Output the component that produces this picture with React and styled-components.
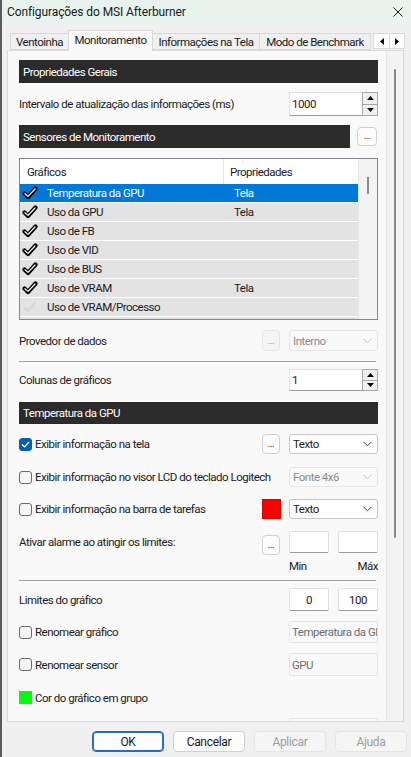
import React from "react";
import styled, { createGlobalStyle } from "styled-components";

const Global = createGlobalStyle`
  html, body { margin: 0; padding: 0; }
  body {
    width: 411px; height: 757px; overflow: hidden;
    font-family: Roboto, "Liberation Sans", sans-serif;
    font-size: 11.5px; color: #000; letter-spacing: -0.5px;
  }
  * { box-sizing: border-box; }
`;

const Window = styled.div`
  width: 411px; height: 757px;
  border-left: 2px solid #5a5a5a;
  background: #f0f0f0;
  display: flex; flex-direction: column;
`;

const TitleBar = styled.div`
  height: 23px; flex: none;
  background: #e9f3ee;
  display: flex; align-items: center; justify-content: space-between;
  padding: 0 8px 0 5px;
  font-size: 12px; letter-spacing: -0.1px; color: #1a1a1a;
`;

const TabStrip = styled.div`
  height: 27px; flex: none;
  display: flex; align-items: flex-end;
  padding-left: 8px; padding-right: 6px;
  position: relative; z-index: 1;
`;

const Tab = styled.div`
  width: ${p => p.$w}px;
  height: ${p => (p.$active ? 21 : 17)}px;
  margin-bottom: ${p => (p.$active ? -1 : 0)}px;
  border: 1px solid #d9d9d9;
  border-bottom: ${p => (p.$active ? "none" : "1px solid #d9d9d9")};
  margin-left: ${p => (p.$first ? 0 : -1)}px;
  background: ${p => (p.$active ? "#f9f9f9" : "#f0f0f0")};
  display: flex; justify-content: center;
  align-items: ${p => (p.$active ? "flex-start" : "center")};
  padding-top: ${p => (p.$active ? 2 : 0)}px;
  white-space: nowrap; color: #1a1a1a;
`;

const ArrowGroup = styled.div`
  margin-left: auto; align-self: flex-start; margin-top: 10px;
  display: flex; height: 16px;
  border: 1px solid #d9d9d9; background: #fdfdfd;
`;

const ArrowBtn = styled.div`
  width: 15px; display: flex; align-items: center; justify-content: center;
  & + & { border-left: 1px solid #d9d9d9; }
`;

const Panel = styled.div`
  height: 672px; flex: none;
  margin: 0 7px 0 5px;
  border: 1px solid #d9d9d9;
  background: #f9f9f9;
  display: flex;
`;

const Viewport = styled.div`
  flex: 1; overflow: hidden; min-width: 0;
  padding: 9px 8px 0 11px;
  display: flex; flex-direction: column;
`;

const Track = styled.div`
  width: 17px; flex: none;
  border-left: 1px solid #e6e6e6;
  background: #f3f3f3;
  display: flex; justify-content: center;
`;

const Thumb = styled.div`
  width: 2px; height: 469px; margin-top: 18px;
  background: #8a8a8a; border-radius: 1px;
`;

const Header = styled.div`
  height: ${p => p.$h || 23}px;
  margin-top: ${p => p.$mt || 0}px;
  background: #2b2b2b; color: #fff;
  display: flex; align-items: center;
  padding-left: 4px;
  flex: ${p => (p.$grow ? 1 : "none")};
  align-self: stretch;
`;

const Row = styled.div`
  display: flex; align-items: center;
  height: ${p => p.$h}px;
  margin-top: ${p => p.$mt}px;
  flex: none;
`;

const Label = styled.div`
  flex: 1; min-width: 0; white-space: nowrap; color: #1a1a1a;
  display: flex; align-items: center;
`;

const Controls = styled.div`
  width: 89px; flex: none; height: 100%;
  display: flex; justify-content: space-between; align-items: stretch;
`;

const Dots = styled.div`
  width: ${p => p.$w || 18}px; height: ${p => p.$h || 20}px; flex: none;
  margin-right: ${p => p.$mr ?? 9}px;
  margin-left: ${p => p.$ml ?? 0}px;
  border: 1px solid ${p => (p.$disabled ? "#e6e6e6" : "#d0d0d0")};
  border-radius: 4px;
  background: ${p => (p.$disabled ? "#f5f5f5" : "#fdfdfd")};
  color: ${p => (p.$disabled ? "#a0a0a0" : "#333")};
  display: flex; align-items: flex-end; justify-content: center;
  font-size: 10px; line-height: 1; padding-bottom: 4px;
  letter-spacing: -0.5px;
  align-self: ${p => (p.$bottom ? "flex-end" : "center")};
`;

const Swatch = styled.div`
  width: 19px; height: 20px; margin-right: 8px; flex: none;
  background: ${p => p.$color};
  border: 1px solid rgba(0,0,0,0.15);
`;

const Select = styled.div`
  width: 89px; height: 100%;
  border: 1px solid ${p => (p.$disabled ? "#e5e5e5" : "#c6c6c6")};
  border-radius: 3px;
  background: ${p => (p.$disabled ? "#f9f9f9" : "#fff")};
  color: ${p => (p.$disabled ? "#8a8a8a" : "#1a1a1a")};
  display: flex; align-items: center; justify-content: space-between;
  padding: 0 5px 0 3px;
`;

const TextBox = styled.div`
  width: ${p => p.$w || 89}px; height: 100%;
  border: 1px solid ${p => (p.$disabled ? "#e5e5e5" : "#e0e0e0")};
  border-bottom-color: ${p => (p.$disabled ? "#e5e5e5" : "#9a9a9a")};
  border-radius: 2px;
  background: ${p => (p.$disabled ? "#f9f9f9" : "#fff")};
  color: ${p => (p.$disabled ? "#6d6d6d" : "#1a1a1a")};
  display: flex; align-items: center;
  justify-content: ${p => (p.$center ? "center" : "flex-start")};
  padding-left: ${p => (p.$center ? 0 : 2)}px;
  overflow: hidden; white-space: nowrap;
`;

const Spin = styled.div`
  width: 89px; height: 100%;
  display: flex;
`;

const SpinInput = styled.div`
  flex: 1; background: #fff;
  border: 1px solid #e0e0e0; border-bottom-color: #9a9a9a; border-right: none;
  display: flex; align-items: center; padding-left: 2px; color: #1a1a1a;
`;

const SpinButtons = styled.div`
  width: 16px; display: flex; flex-direction: column;
  border: 1px solid #a8a8a8; background: #f0f0f0;
`;

const SpinHalf = styled.div`
  flex: 1; display: flex; align-items: center; justify-content: center;
  & + & { border-top: 1px solid #a8a8a8; }
`;

const Separator = styled.div`
  height: 1px; margin-top: ${p => p.$mt}px; margin-right: 2px;
  background: #a0a0a0; flex: none;
`;

const Check = styled.div`
  width: 13px; height: 13px; margin-right: 3px; flex: none;
  border-radius: 3px;
  border: 1px solid ${p => (p.$checked ? "#005fb8" : "#6b6b6b")};
  background: ${p => (p.$checked ? "#005fb8" : "#f5f5f5")};
  display: flex; align-items: center; justify-content: center;
`;

const ColorBox = styled.div`
  width: 13px; height: 13px; margin-right: 3px; flex: none; background: ${p => p.$color};
`;

const SubLabels = styled.div`
  width: 89px; display: flex; justify-content: space-between; color: #1a1a1a;
`;

const ListBox = styled.div`
  height: 162px; margin-top: 10px; flex: none;
  border: 1px solid #828790; background: #fff;
  display: flex;
`;

const ListMain = styled.div`
  flex: 1; overflow: hidden; display: flex; flex-direction: column;
`;

const ListHead = styled.div`
  height: 25px; flex: none; display: flex; align-items: center;
  background: #fff; color: #1a1a1a;
`;

const HeadCell = styled.div`
  width: ${p => p.$w}px; height: 100%;
  display: flex; align-items: center;
  padding-left: ${p => p.$pl}px;
  border-right: ${p => (p.$sep ? "1px solid #e5e5e5" : "none")};
`;

const ListRow = styled.div`
  height: 19px; flex: none; display: flex; align-items: center;
  background: ${p => (p.$sel ? "#0078d7" : "#e3e3e3")};
  border-bottom: 1px solid #fff;
  color: ${p => (p.$sel ? "#fff" : "#1a1a1a")};
`;

const CheckCell = styled.div`
  width: 27px; padding-left: 2px; display: flex; align-items: center;
`;

const NameCell = styled.div`
  width: 183px; white-space: nowrap;
`;

const PropCell = styled.div`
  padding-left: 4px;
`;

const ListScroll = styled.div`
  width: 19px; flex: none; background: #f3f3f3;
  border-left: 1px solid #e8e8e8;
  display: flex; justify-content: center;
`;

const ListThumb = styled.div`
  width: 2px; height: 17px; margin-top: 18px; background: #8a8a8a;
`;

const Footer = styled.div`
  flex: 1; display: flex; justify-content: flex-end; align-items: flex-start;
  gap: 9px; padding: 9px 4px 0 0;
`;

const Button = styled.div`
  width: 72px; height: 21px;
  border-radius: 4px;
  border: 1px solid ${p => (p.$primary ? "#2a6cc0" : p.$disabled ? "#e5e5e5" : "#d0d0d0")};
  box-shadow: ${p => (p.$primary ? "inset 0 0 0 1px #2a6cc0" : "none")};
  background: ${p => (p.$disabled ? "#f5f5f5" : "#fdfdfd")};
  color: ${p => (p.$disabled ? "#9d9d9d" : "#1a1a1a")};
  display: flex; align-items: center; justify-content: center;
  font-size: 12px; letter-spacing: -0.3px;
`;

const Chevron = ({ color = "#333" }) => (
  <svg width="9" height="6" viewBox="0 0 9 6">
    <path d="M0.5 0.8 L4.5 4.8 L8.5 0.8" fill="none" stroke={color} strokeWidth="1" />
  </svg>
);

const Tri = ({ up }) => (
  <svg width="7" height="4" viewBox="0 0 7 4">
    <path d={up ? "M0 4 L3.5 0 L7 4 Z" : "M0 0 L3.5 4 L7 0 Z"} fill="#000" />
  </svg>
);

const SideTri = ({ left }) => (
  <svg width="4" height="7" viewBox="0 0 4 7">
    <path d={left ? "M4 0 L0 3.5 L4 7 Z" : "M0 0 L4 3.5 L0 7 Z"} fill="#000" />
  </svg>
);

const ListCheck = ({ faint }) => (
  <svg width="16" height="14" viewBox="0 0 16 14">
    {faint ? (
      <path d="M2.5 7.5 L6 11 L13.5 2.5" fill="none" stroke="#d8d8d8" strokeWidth="2.5" strokeLinejoin="round" />
    ) : (
      <>
        <path d="M2.5 7.5 L6 11 L13.5 2.5" fill="none" stroke="#000" strokeWidth="4.2" strokeLinejoin="round" strokeLinecap="round" />
        <path d="M3 7.7 L6 10.4 L13 3" fill="none" stroke="#fff" strokeWidth="1.2" strokeLinejoin="round" strokeLinecap="round" />
      </>
    )}
  </svg>
);

const TickMark = () => (
  <svg width="9" height="7" viewBox="0 0 9 7">
    <path d="M1 3.5 L3.5 6 L8 1" fill="none" stroke="#fff" strokeWidth="1.2" />
  </svg>
);

const SpinBox = ({ value }) => (
  <Spin>
    <SpinInput>{value}</SpinInput>
    <SpinButtons>
      <SpinHalf><Tri up /></SpinHalf>
      <SpinHalf><Tri /></SpinHalf>
    </SpinButtons>
  </Spin>
);

const sensors = [
  { name: "Temperatura da GPU", prop: "Tela", sel: true },
  { name: "Uso da GPU", prop: "Tela" },
  { name: "Uso de FB", prop: "" },
  { name: "Uso de VID", prop: "" },
  { name: "Uso de BUS", prop: "" },
  { name: "Uso de VRAM", prop: "Tela" },
  { name: "Uso de VRAM/Processo", prop: "", faint: true },
  { name: "Uso de RAM", prop: "", faint: true },
];

export default function App() {
  return (
    <>
      <Global />
      <Window>
        <TitleBar>
          <span>Configurações do MSI Afterburner</span>
          <svg width="10" height="10" viewBox="0 0 10 10">
            <path d="M0.5 0.5 L9.5 9.5 M9.5 0.5 L0.5 9.5" stroke="#1a1a1a" strokeWidth="1" />
          </svg>
        </TitleBar>

        <TabStrip>
          <Tab $w={59} $first>Ventoinha</Tab>
          <Tab $w={85} $active>Monitoramento</Tab>
          <Tab $w={108}>Informações na Tela</Tab>
          <Tab $w={112}>Modo de Benchmark</Tab>
          <ArrowGroup>
            <ArrowBtn><SideTri left /></ArrowBtn>
            <ArrowBtn><SideTri /></ArrowBtn>
          </ArrowGroup>
        </TabStrip>

        <Panel>
          <Viewport>
            <Header>Propriedades Gerais</Header>

            <Row $h={24} $mt={9}>
              <Label>Intervalo de atualização das informações (ms)</Label>
              <Controls><SpinBox value="1000" /></Controls>
            </Row>

            <Row $h={23} $mt={9}>
              <Header $grow>Sensores de Monitoramento</Header>
              <Dots $w={20} $h={19} $mr={1} $ml={7}>...</Dots>
            </Row>

            <ListBox>
              <ListMain>
                <ListHead>
                  <HeadCell $w={204} $pl={7} $sep>Gráficos</HeadCell>
                  <HeadCell $w={120} $pl={6}>Propriedades</HeadCell>
                </ListHead>
                {sensors.map(s => (
                  <ListRow key={s.name} $sel={s.sel}>
                    <CheckCell><ListCheck faint={s.faint} /></CheckCell>
                    <NameCell>{s.name}</NameCell>
                    <PropCell>{s.prop}</PropCell>
                  </ListRow>
                ))}
              </ListMain>
              <ListScroll><ListThumb /></ListScroll>
            </ListBox>

            <Row $h={21} $mt={10}>
              <Label>Provedor de dados</Label>
              <Dots $disabled $h={21}>...</Dots>
              <Controls>
                <Select $disabled>Interno<Chevron color="#c0c0c0" /></Select>
              </Controls>
            </Row>

            <Separator $mt={10} />

            <Row $h={22} $mt={7}>
              <Label>Colunas de gráficos</Label>
              <Controls><SpinBox value="1" /></Controls>
            </Row>

            <Header $h={22} $mt={11}>Temperatura da GPU</Header>

            <Row $h={20} $mt={10}>
              <Label><Check $checked><TickMark /></Check>Exibir informação na tela</Label>
              <Dots>...</Dots>
              <Controls><Select>Texto<Chevron /></Select></Controls>
            </Row>

            <Row $h={20} $mt={13}>
              <Label><Check />Exibir informação no visor LCD do teclado Logitech</Label>
              <Controls><Select $disabled>Fonte 4x6<Chevron color="#c0c0c0" /></Select></Controls>
            </Row>

            <Row $h={20} $mt={12}>
              <Label><Check />Exibir informação na barra de tarefas</Label>
              <Swatch $color="#ff0000" />
              <Controls><Select>Texto<Chevron /></Select></Controls>
            </Row>

            <Row $h={22} $mt={12}>
              <Label>Ativar alarme ao atingir os limites:</Label>
              <Dots $bottom style={{ marginBottom: -2 }}>...</Dots>
              <Controls>
                <TextBox $w={40} />
                <TextBox $w={40} />
              </Controls>
            </Row>

            <Row $h={14} $mt={6}>
              <Label />
              <SubLabels><span>Min</span><span>Máx</span></SubLabels>
            </Row>

            <Separator $mt={7} />

            <Row $h={23} $mt={7}>
              <Label>Limites do gráfico</Label>
              <Controls>
                <TextBox $w={40} $center>0</TextBox>
                <TextBox $w={40} $center>100</TextBox>
              </Controls>
            </Row>

            <Row $h={22} $mt={10}>
              <Label><Check />Renomear gráfico</Label>
              <Controls><TextBox $disabled>Temperatura da GPU</TextBox></Controls>
            </Row>

            <Row $h={23} $mt={10}>
              <Label><Check />Renomear sensor</Label>
              <Controls><TextBox $disabled>GPU</TextBox></Controls>
            </Row>

            <Row $h={23} $mt={10}>
              <Label><ColorBox $color="#00ff00" />Cor do gráfico em grupo</Label>
            </Row>

            <Row $h={22} $mt={9}>
              <Label />
              <Controls><TextBox $disabled /></Controls>
            </Row>
          </Viewport>
          <Track><Thumb /></Track>
        </Panel>

        <Footer>
          <Button $primary>OK</Button>
          <Button>Cancelar</Button>
          <Button $disabled>Aplicar</Button>
          <Button $disabled>Ajuda</Button>
        </Footer>
      </Window>
    </>
  );
}
